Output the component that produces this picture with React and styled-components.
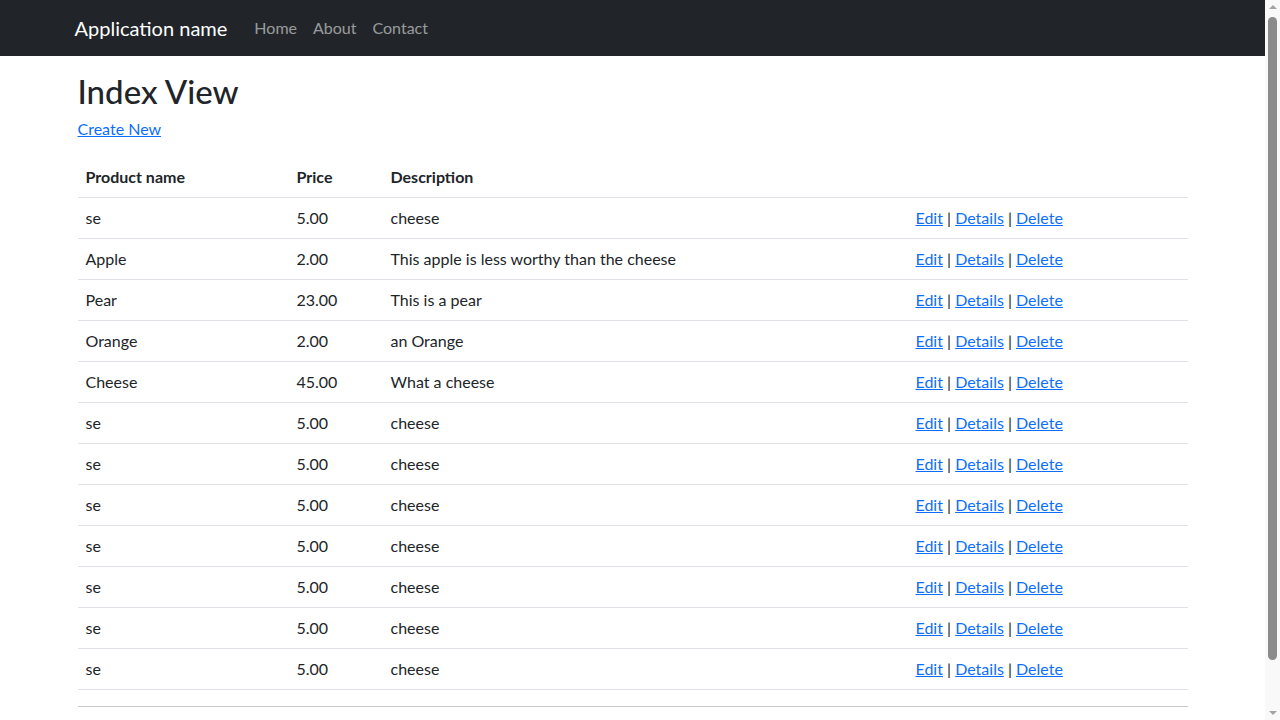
import React from 'react';
import styled, { createGlobalStyle } from 'styled-components';

const GlobalStyle = createGlobalStyle`
  body {
    margin: 0;
    font-family: Lato, "Liberation Sans", sans-serif;
    font-size: 16px;
    line-height: 1.5;
    color: #212529;
    background: #fff;
  }
  * {
    box-sizing: border-box;
  }
`;

// page area left of the browser's scrollbar
const Page = styled.div`
  margin-right: 15px;
`;

const ScrollTrack = styled.div`
  position: fixed;
  top: 0;
  right: 0;
  width: 15px;
  height: 100vh;
  background: #f9f9f9;
`;

const ScrollThumb = styled.div`
  position: absolute;
  top: 17px;
  bottom: 60px;
  left: 3px;
  width: 9px;
  border-radius: 5px;
  background: #8b8b8b;
`;

const ScrollArrow = styled.div`
  position: absolute;
  left: 4px;
  width: 0;
  height: 0;
  border-left: 4px solid transparent;
  border-right: 4px solid transparent;
  ${(p) =>
    p.$down
      ? 'bottom: 5px; border-top: 4px solid #a3a3a3;'
      : 'top: 5px; border-bottom: 4px solid #a3a3a3;'}
`;

const Navbar = styled.nav`
  background-color: #212529;
  height: 56px;
`;

const NavContainer = styled.div`
  width: 1140px;
  margin: 0 auto;
  padding: 0 12px;
  height: 100%;
  display: flex;
  align-items: center;
`;

const Brand = styled.a`
  color: #fff;
  font-size: 20px;
  text-decoration: none;
  margin-right: 19px;
  padding: 5px 0;
`;

const NavLinks = styled.ul`
  display: flex;
  list-style: none;
  margin: 0;
  padding: 0;
`;

const NavLink = styled.a`
  display: block;
  color: rgba(255, 255, 255, 0.55);
  text-decoration: none;
  padding: 8px;
`;

const Container = styled.div`
  width: 1140px;
  margin: 0 auto;
  padding: 16px 15px 0;
`;

const Title = styled.h1`
  font-size: 33px;
  font-weight: 500;
  line-height: 1.2;
  margin: 0 0 5px;
`;

const Para = styled.p`
  margin: 0 0 16px;
`;

const Link = styled.a`
  color: #0d6efd;
  text-decoration: underline;
`;

const Table = styled.table`
  width: 100%;
  border-collapse: collapse;
  margin-bottom: 16px;
  table-layout: fixed;
`;

const Cell = styled.td`
  padding: 8px;
  border-bottom: 1px solid #dee2e6;
  text-align: left;
  vertical-align: top;
  width: ${(p) => p.$w || 'auto'};
`;

const Head = styled(Cell).attrs({ as: 'th' })`
  font-weight: 700;
`;

const Rule = styled.hr`
  margin: 16px 0;
  border: 0;
  border-top: 1px solid #212529;
  opacity: 0.25;
`;

const Footer = styled.footer`
  padding: 12px 0 16px;
`;

const products = [
  ['se', '5.00', 'cheese'],
  ['Apple', '2.00', 'This apple is less worthy than the cheese'],
  ['Pear', '23.00', 'This is a pear'],
  ['Orange', '2.00', 'an Orange'],
  ['Cheese', '45.00', 'What a cheese'],
  ['se', '5.00', 'cheese'],
  ['se', '5.00', 'cheese'],
  ['se', '5.00', 'cheese'],
  ['se', '5.00', 'cheese'],
  ['se', '5.00', 'cheese'],
  ['se', '5.00', 'cheese'],
  ['se', '5.00', 'cheese'],
];

export default function App() {
  return (
    <>
      <GlobalStyle />
      <Page>
        <Navbar>
          <NavContainer>
            <Brand href="#">Application name</Brand>
            <NavLinks>
              <li><NavLink href="#">Home</NavLink></li>
              <li><NavLink href="#">About</NavLink></li>
              <li><NavLink href="#">Contact</NavLink></li>
            </NavLinks>
          </NavContainer>
        </Navbar>
        <Container>
          <Title>Index View</Title>
          <Para>
            <Link href="#">Create New</Link>
          </Para>
          <Table>
            <thead>
              <tr>
                <Head $w="211px">Product name</Head>
                <Head $w="94px">Price</Head>
                <Head $w="525px">Description</Head>
                <Head />
              </tr>
            </thead>
            <tbody>
              {products.map(([name, price, desc], i) => (
                <tr key={i}>
                  <Cell>{name}</Cell>
                  <Cell>{price}</Cell>
                  <Cell>{desc}</Cell>
                  <Cell>
                    <Link href="#">Edit</Link> | <Link href="#">Details</Link> |{' '}
                    <Link href="#">Delete</Link>
                  </Cell>
                </tr>
              ))}
            </tbody>
          </Table>
          <Rule />
          <Footer>
            <p>&copy; 2024 - My ASP.NET Application</p>
          </Footer>
        </Container>
      </Page>
      <ScrollTrack>
        <ScrollArrow />
        <ScrollThumb />
        <ScrollArrow $down />
      </ScrollTrack>
    </>
  );
}
